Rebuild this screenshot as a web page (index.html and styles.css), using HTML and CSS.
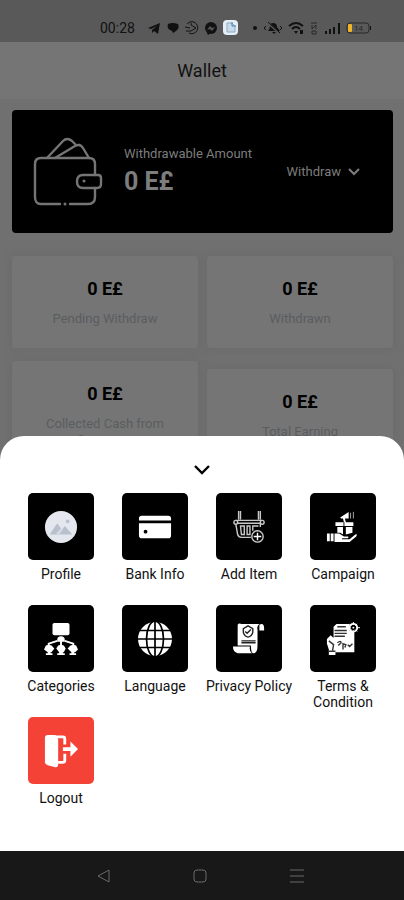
FILE: index.html
```html
<!DOCTYPE html>
<html lang="en">
<head>
<meta charset="utf-8">
<meta name="viewport" content="width=device-width, initial-scale=1">
<title>Wallet</title>
<link rel="stylesheet" href="styles.css">
</head>
<body>
<div class="screen">
  <div class="status">
    <span class="time">00:28</span>
    <svg class="apps" width="94" height="18" viewBox="0 0 94 18" aria-hidden="true">
      <path d="M0 9 12 4 10 15 6 12 4 14 4 11 9 7 3 10Z"/>
      <path d="M20 5Q24 3 30 5Q32 9 28 12L25 14 24 12Q18 10 20 5Z"/>
      <g fill="none" stroke="#111"><path d="M39 5A6 6 0 1 1 41 14M43 4V6L48 9 43 12H38M37 8 42 9"/></g>
      <circle cx="63" cy="9" r="6"/><path d="m59 14 1 2 3-2"/>
      <path d="m59 11 3-4 2 2 3-1-3 4-2-2z" fill="#595959"/>
      <rect x="75" y="1" width="15" height="15" rx="4" fill="#e5eef5"/>
      <path d="M79 4h5l3 3v6h-8z" fill="#c9dceb" stroke="#8ba9c1"/><path d="M84 3v4h4" fill="none" stroke="#477ca6"/>
    </svg>
    <svg class="signals" width="120" height="18" viewBox="0 0 120 18" aria-hidden="true">
      <circle cx="3" cy="9" r="2"/>
      <path d="M16 12Q18 10 18 7Q18 4 21 4Q25 4 25 8L28 12ZM20 13h4l-2 2z"/>
      <path d="m15 3 13 12" stroke="#595959" stroke-width="2"/><path d="m16 3 12 11M14 7l-2 2 2 2M28 7l2 2-2 2" fill="none" stroke="#111"/>
      <g fill="none" stroke="#111" stroke-width="2"><path d="M37 7Q44 1 51 7M40 10Q44 6 48 10"/></g><path d="m42 12 2 3 2-3zM48 11h3v4h-3z"/>
      <path d="M59 4h6M60 6v4l4-4v4M60 12h4v3h-4z" fill="none" stroke="#292929"/>
      <path d="M73 12h2v3h-2zM77 10h2v5h-2zM81 8h2v7h-2zM86 4h2v11h-2z"/>
      <rect x="95" y="4" width="22" height="10" rx="3" fill="none" stroke="#292929"/><path d="M118 7h1v4h-1z"/>
      <rect x="96" y="5" width="4" height="8" rx="1" fill="#f0b429"/>
      <text x="102" y="12" font-size="8" fill="#292929">14</text>
    </svg>
  </div>
  <header class="appbar"><h1>Wallet</h1></header>

  <main class="content">
    <section class="hero">
      <svg class="wallet" width="70" height="70" viewBox="0 0 70 70" aria-hidden="true">
        <g fill="none" stroke="#757575" stroke-width="2.400" stroke-linecap="round" stroke-linejoin="round">
          <path d="M27 67H8Q2 67 2 60V27Q2 21 8 21H56Q62 21 62 27V38M62 51V60Q62 67 55 67H37"/>
          <path d="M14 21 30 4Q34 0 39 4L43 8M22 21 42 9Q47 6 50 11L56 21"/>
          <path d="M66 38H50Q44 38 44 44.500T50 51H64Q68 51 68 47V41Q68 38 65 38Z"/>
        </g>
        <circle cx="51" cy="44" r="1.500" fill="#757575"/><circle cx="32" cy="67" r="1.500" fill="#757575"/>
      </svg>
      <div class="balance">
        <p>Withdrawable Amount</p>
        <strong>0 E£</strong>
      </div>
      <button class="withdraw" type="button">Withdraw
        <svg width="12" height="8" viewBox="0 0 12 8" aria-hidden="true"><path d="m1 1 5 5 5-5" fill="none" stroke="currentColor" stroke-width="2"/></svg>
      </button>
    </section>
    <section class="stats">
      <div class="stat"><strong>0 E£</strong><p>Pending Withdraw</p></div>
      <div class="stat"><strong>0 E£</strong><p>Withdrawn</p></div>
      <div class="stat"><strong>0 E£</strong><p>Collected Cash from Customer</p></div>
      <div class="stat"><strong>0 E£</strong><p>Total Earning</p></div>
    </section>
  </main>

  <div class="bottom">
    <section class="sheet">
      <button class="close" type="button" aria-label="Close menu">
        <svg width="16" height="10" viewBox="0 0 16 10" aria-hidden="true"><path d="m1 1 7 7 7-7" fill="none" stroke="#000" stroke-width="2.400"/></svg>
      </button>
      <nav class="menu">
        <a href="#profile"><span class="tile"><svg viewBox="0 0 36 36" aria-hidden="true">
          <circle cx="18" cy="18" r="17" fill="#e4e7ee"/><path d="M6 26 14 14 19 21 22 17 30 26Z" fill="#b9c0cd"/><path d="m12 26 6-7 2 2-4 5z" fill="#d3d8e1"/><circle cx="25" cy="12" r="2" fill="#b9c0cd"/></svg></span>Profile</a>
        <a href="#bank"><span class="tile"><svg viewBox="0 0 36 36" aria-hidden="true">
          <path d="M1 11V9Q1 6 4 6H32Q35 6 35 9V11H1ZM1 14H35V27Q35 30 32 30H4Q1 30 1 27Z"/><circle cx="8" cy="23" r="2" fill="#000"/></svg></span>Bank Info</a>
        <a href="#add"><span class="tile"><svg viewBox="0 0 36 36" aria-hidden="true">
          <g fill="none" stroke="#c8c8c8" stroke-width="1.500"><path d="M7 1v9M9 1v9M28 1v9M30 1v9M4 11H32"/><circle cx="4" cy="13" r="2"/><circle cx="32" cy="13" r="2"/><path d="M6 14H30V18M4 15 6 26Q7 29 10 29H20M9 17h4v9h-3zM16 17h3v9h-3zM22 22v-5h6"/><circle cx="27" cy="28" r="6"/><path d="M27 24v8M23 28h8" stroke="#fff"/></g></svg></span>Add Item</a>
        <a href="#campaign"><span class="tile"><svg viewBox="0 0 36 36" aria-hidden="true">
          <path d="M15 8 24 2V9L16 9ZM18 9h2l1 4h-2zM10 13H29V17H10ZM12 18H18V26L15 24H12ZM21 18H28V24L21 26ZM1 25H4V33H1ZM5 25H8V33H5ZM9 25H14L19 28H23Q25 28 23 30H17V31H25L31 26Q34 25 32 28L25 34H9Z"/><path d="M26 3v6M29 2v7" stroke="#aaa" fill="none"/><path d="M19 13v14" stroke="#000"/></svg></span>Campaign</a>
        <a href="#categories"><span class="tile"><svg viewBox="0 0 36 36" aria-hidden="true">
          <rect x="9" y="1" width="18" height="13" rx="2"/><path d="M14 19Q14 15 18 15Q22 15 22 19V21H14Z"/><path d="M18 18V25M5 26V23L14 20M22 20 31 23V26" fill="none" stroke="#fff" stroke-width="2"/>
          <path d="M2 25 5 24 8 25 11 28 8 32H7V33H9V35H2V33H4V32L0 29ZM15 25 18 24 21 25 23 28 21 32H20V33H22V35H14V33H16V32L13 28ZM28 25 31 24 34 25 36 29 33 32H32V33H34V35H27V33H29V32L25 28Z"/></svg></span>Categories</a>
        <a href="#language"><span class="tile"><svg viewBox="0 0 36 36" aria-hidden="true">
          <circle cx="18" cy="18" r="18"/><g fill="none" stroke="#000" stroke-width="1.800"><path d="M18 0V36M0 18H36M2 9H34M2 27H34"/><ellipse cx="18" cy="18" rx="9" ry="19"/></g></svg></span>Language</a>
        <a href="#privacy"><span class="tile"><svg viewBox="0 0 36 36" aria-hidden="true">
          <path d="M6 3Q7 1 10 2H29Q26 4 27 8V25Q27 34 22 33Q20 32 20 25H6V7ZM29 3Q34 0 34 7V9H29ZM1 26H19Q18 31 21 33H6Q1 32 1 26Z"/>
          <g fill="none" stroke="#222" stroke-width="1.500"><path d="m17 4 5 3v4q-1 4-5 5-4-1-5-5V7zM14 10l2 2 4-4M10 20h15M10 22h15"/></g></svg></span>Privacy Policy</a>
        <a href="#terms"><span class="tile"><svg viewBox="0 0 36 36" aria-hidden="true">
          <path d="M8 5 11 2H25V9H30V32H10V35H3V29L1 23V18L5 14L8 17Z"/><circle cx="29" cy="6" r="4" fill="#000" stroke="#fff" stroke-width="2"/><path d="M29 0v3M29 9v3M23 6h3M32 6h4M25 2l2 2M31 8l2 2M33 2l-2 2M27 8l-2 2" stroke="#fff"/><circle cx="29" cy="6" r="1"/>
          <g fill="none" stroke="#333" stroke-width="1.500"><path d="M12 5h9M9 9h13M9 12h13M9 15h11M3 20l5 4-1 6M12 22q4-3 4 0l-3 3M18 29v-6l3 1-1 3M23 24l2 2 3-3M3 31h7"/></g></svg></span>Terms &amp; Condition</a>
        <a href="#logout"><span class="tile danger"><svg viewBox="0 0 36 36" aria-hidden="true">
          <path d="M1 4Q1 1 4 1H12Q15 3 15 6V32Q15 36 11 35L4 33Q1 32 1 30Z"/><path d="M9 3H20Q22 3 22 5V11M22 21V28Q22 30 20 30H15" fill="none" stroke="#fff" stroke-width="3"/><path d="M20 14H28V8L36 16 28 24V18H20Z"/></svg></span>Logout</a>
      </nav>
    </section>
    <div class="sysnav">
      <button type="button" aria-label="Back"><svg width="16" height="16" viewBox="0 0 16 16"><path d="M14 2V14L3 8Z"/></svg></button>
      <button type="button" aria-label="Home"><svg width="16" height="16" viewBox="0 0 16 16"><rect x="2" y="2" width="12" height="12" rx="3"/></svg></button>
      <button type="button" aria-label="Recent apps"><svg width="16" height="16" viewBox="0 0 16 16"><path d="M1 2h14M1 8h14M1 14h14"/></svg></button>
    </div>
  </div>
</div>
</body>
</html>
```
FILE: styles.css
```css
* { box-sizing: border-box; }
body { margin: 0; background: #707070; font-family: Roboto, sans-serif; font-size: 13px; line-height: 16px; color: #111; }
h1, p { margin: 0; }
button { border: 0; padding: 0; background: none; font: inherit; color: inherit; }
svg { display: block; flex: none; }

.screen { position: relative; min-height: 100vh; overflow: hidden; }

.status { display: flex; align-items: center; height: 42px; padding: 14px 32px 0 100px; background: #595959; }
.time { flex: 1; font-size: 14px; white-space: nowrap; }
.apps { margin-right: 10px; }
.apps, .signals { fill: #111; }

.appbar { display: flex; align-items: center; justify-content: center; height: 57px; background: #757575; }
.appbar h1 { font-size: 18px; line-height: 24px; font-weight: 400; }

.content { padding: 11px 11px 0 12px; }
.hero { display: flex; align-items: center; height: 123px; padding: 0 33px 0 21px; border-radius: 4px; background: #000; color: #7d7d7d; }
.balance { flex: 1; padding-left: 21px; }
.balance p { white-space: nowrap; }
.balance strong { display: block; margin-top: 4px; font-size: 25px; line-height: 32px; }
.withdraw { display: flex; align-items: center; gap: 7px; }

.stats { display: grid; grid-template-columns: 1fr 1fr; align-items: center; gap: 13px 9px; margin-top: 23px; text-align: center; }
.stat { padding: 22px 24px 21px; border-radius: 4px; background: #757575; box-shadow: 0 0 8px #6a6a6a; }
.stat strong { display: block; margin-bottom: 11px; font-size: 18px; line-height: 22px; font-weight: 700; color: #000; }
.stat p { color: #5a5d60; }

/* The sheet slides over the page and rests on the system navigation. */
.bottom { position: absolute; left: 0; right: 0; bottom: 0; }
.sheet { padding: 26px 14px 22px; border-radius: 24px 24px 0 0; background: #fff; }
.close { display: flex; align-items: center; justify-content: center; width: 32px; height: 16px; margin: 0 auto 15px; }
.menu { display: grid; grid-template-columns: repeat(4, 1fr); grid-auto-rows: 112px; }
.menu a { display: flex; flex-direction: column; align-items: center; text-align: center; font-size: 14px; color: #111; text-decoration: none; }
.tile { display: flex; align-items: center; justify-content: center; width: 66px; height: 67px; margin-bottom: 6px; border-radius: 5px; background: #000; }
.tile svg { width: 34px; height: 34px; fill: #fff; }
.tile.danger { background: #f44336; }

.sysnav { display: flex; justify-content: center; gap: 81px; height: 49px; padding-right: 5px; background: #181818; }
.sysnav svg { fill: none; stroke: #696969; stroke-width: 1; }
```
